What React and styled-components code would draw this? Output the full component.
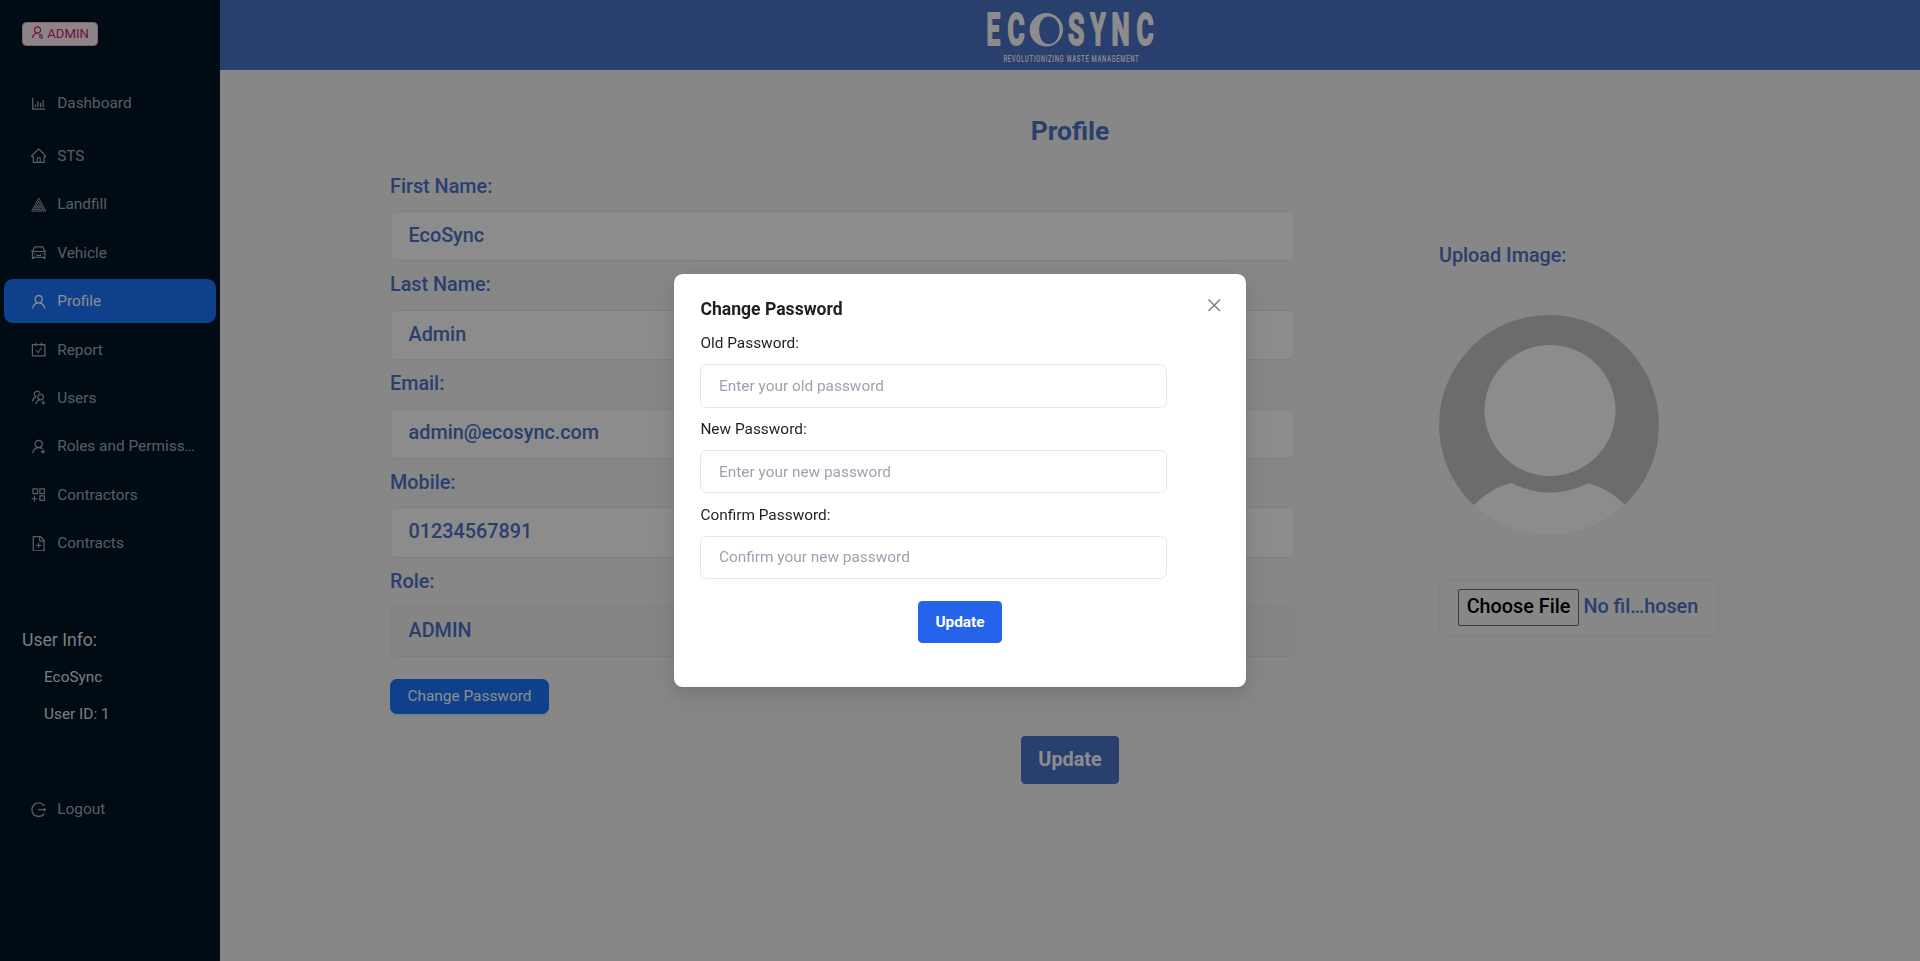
import React from 'react';
import styled, { createGlobalStyle, css } from 'styled-components';
import {
  AiOutlineBarChart,
  AiOutlineHome,
  AiOutlineCar,
  AiOutlineUser,
  AiOutlineCarryOut,
  AiOutlineUsergroupAdd,
  AiOutlineUserAdd,
  AiOutlineAppstoreAdd,
  AiOutlineFileAdd,
  AiOutlineLogout,
  AiOutlineUserSwitch,
  AiOutlineClose,
} from 'react-icons/ai';

const BRAND = '#4b73c8';
const PRIMARY = '#1a75ff';
const ICON_BOX = '64 64 896 896';

const GlobalStyle = createGlobalStyle`
  *, *::before, *::after { box-sizing: border-box; }
  body {
    margin: 0;
    overflow: hidden;
    font-family: Roboto, 'Liberation Sans', sans-serif;
    font-size: 15.4px;
    line-height: 24.2px;
    color: rgba(0, 0, 0, 0.88);
  }
  button, input { font: inherit; }
`;

const Page = styled.div`
  display: flex;
  height: 100vh;
  background: #f6f6f6;
`;

/* Sidebar */

const Sidebar = styled.aside`
  flex: 0 0 220px;
  min-width: 0;
  display: flex;
  flex-direction: column;
  align-items: stretch;
  background: #001426;
`;

const RoleTag = styled.span`
  align-self: flex-start;
  display: flex;
  align-items: center;
  gap: 2.8px;
  height: 24px;
  margin: 22px 0 31px 22px;
  padding: 0 7.9px 0 8.2px;
  border: 1px solid #ffadd2;
  border-radius: 4.4px;
  background: #fff0f6;
  color: #c41d7f;
  font-size: 13.2px;

  svg { margin-top: -3px; }
`;

const Menu = styled.nav`
  display: flex;
  flex-direction: column;
  gap: 4.4px;
  padding: 4.4px;
`;

const MenuItem = styled.a`
  display: flex;
  align-items: center;
  gap: 11px;
  height: 44px;
  padding: 0 17.6px 0 26.4px;
  border-radius: 8.8px;
  color: rgba(255, 255, 255, 0.65);
  ${(p) => p.$spaced && css`margin-bottom: 4.4px;`}
  ${(p) =>
    p.$active &&
    css`
      background: ${PRIMARY};
      color: #fff;
    `}

  svg { flex: none; width: 15.4px; height: 15.4px; }
`;

const MenuText = styled.span`
  overflow: hidden;
  white-space: nowrap;
  text-overflow: ellipsis;
`;

const UserInfo = styled.section`
  display: flex;
  flex-direction: column;
  gap: 12.8px;
  margin: 58.2px 0 57px;
  padding-left: 44px;
  color: rgba(255, 255, 255, 0.9);
`;

const UserInfoTitle = styled.h3`
  margin: 0 0 0 -22px;
  font-size: 17.6px;
  font-weight: 400;
`;

const UserInfoLine = styled.div``;

/* Main area */

const Main = styled.div`
  flex: 1;
  min-width: 0;
  display: flex;
  flex-direction: column;
`;

const Header = styled.header`
  flex: 0 0 70px;
  display: flex;
  justify-content: center;
  background: ${BRAND};
`;

const Content = styled.main`
  display: flex;
  flex-direction: column;
  align-items: center;
  padding-top: 44px;
  color: ${BRAND};
`;

const PageTitle = styled.h1`
  margin: 0;
  font-size: 26.4px;
  line-height: 35.2px;
  font-weight: 700;
`;

const Columns = styled.div`
  align-self: stretch;
  display: flex;
  gap: 144px;
  padding: 22.3px 0 0 170px;
  font-size: 19.8px;
  line-height: 30.8px;
  font-weight: 500;
`;

const Fields = styled.div`
  width: 905px;
  display: flex;
  flex-direction: column;
  align-items: flex-start;
`;

const Field = styled.label`
  display: flex;
  flex-direction: column;
  gap: 8.8px;
  width: 100%;
  margin-bottom: 8.8px;
`;

const ValueBox = styled.div`
  height: 50.4px;
  padding: 8.8px 17.6px;
  border: 1px solid #e8e9eb;
  border-radius: 6.6px;
  background: ${(p) => (p.$disabled ? '#f2f2f2' : '#fff')};
`;

const PrimaryButton = styled.button`
  height: 35.2px;
  margin-top: 13.4px;
  padding: 0 16.5px 0.5px;
  border: 1px solid ${PRIMARY};
  border-radius: 6.6px;
  background: ${PRIMARY};
  box-shadow: 0 2.2px 0 rgba(5, 145, 255, 0.1);
  color: #fff;
  font-size: 15.4px;
  font-weight: 400;
`;

const Upload = styled.div`
  width: 280px;
  padding-top: 69.3px;
`;

const Avatar = styled.svg`
  display: block;
  width: 220px;
  height: 220px;
  margin: 43.6px 0 44px;
`;

const FileBox = styled.div`
  display: flex;
  align-items: center;
  gap: 4.4px;
  height: 57px;
  padding: 0 17.6px 0 18px;
  border: 1px solid #e9eaec;
  border-radius: 6.6px;
  white-space: nowrap;
`;

const FileButton = styled.button`
  width: 121px;
  height: 37px;
  padding: 0 0 1px;
  border: 1px solid #6b6b6b;
  border-radius: 2px;
  background: transparent;
  color: #000;
`;

const FileName = styled.span`
  padding-bottom: 1px;
`;

const UpdateButton = styled.button`
  height: ${(p) => (p.$large ? '48.4px' : '42px')};
  padding: 0 17.6px;
  border: 0;
  border-radius: 4.4px;
  background: ${(p) => (p.$large ? BRAND : '#2563eb')};
  color: #fff;
  font-size: ${(p) => (p.$large ? '19.8px' : '15.4px')};
  font-weight: 700;
  margin-top: ${(p) => (p.$large ? '22px' : '0')};
`;

/* Modal */

const Mask = styled.div`
  position: fixed;
  inset: 0;
  display: flex;
  justify-content: center;
  align-items: flex-start;
  padding-top: 274px;
  background: rgba(0, 0, 0, 0.45);
`;

const Dialog = styled.div`
  position: relative;
  width: 572px;
  height: 413px;
  padding: 22px 26.4px;
  border-radius: 8.8px;
  background: #fff;
  box-shadow:
    0 6.6px 17.6px 0 rgba(0, 0, 0, 0.08),
    0 3.3px 6.6px -4.4px rgba(0, 0, 0, 0.12),
    0 9.9px 30.8px 8.8px rgba(0, 0, 0, 0.05);
`;

const CloseButton = styled.button`
  position: absolute;
  top: 18.7px;
  right: 19.5px;
  display: grid;
  place-items: center;
  width: 24.2px;
  height: 24.2px;
  padding: 0;
  border: 0;
  background: none;
  color: rgba(0, 0, 0, 0.5);
`;

const DialogTitle = styled.h2`
  margin: 0 0 8.6px;
  font-size: 17.6px;
  line-height: 26.4px;
  font-weight: 700;
`;

const DialogForm = styled.form`
  display: flex;
  flex-direction: column;
  align-items: center;
`;

const PasswordField = styled.label`
  align-self: flex-start;
  display: flex;
  flex-direction: column;
  gap: 8.8px;
  width: 467px;
  margin-bottom: 9.2px;
`;

const PasswordInput = styled.input`
  height: 43.6px;
  padding: 0 17.6px;
  border: 1px solid #e5e7eb;
  border-radius: 6.6px;
  outline: 0;
  background: #fff;

  &::placeholder { color: #9ca3af; opacity: 1; }
`;

const DialogFooter = styled.div`
  margin-top: 12.4px;
`;

/* Drawings */

const LogoSvg = styled.svg`
  display: block;
  width: 172px;
  height: 70px;
  fill: #fff;
  font-family: Roboto, 'Liberation Sans', sans-serif;
`;

const LogoLetter = styled.text`
  font-size: 43.5px;
  font-weight: 700;
  stroke: #fff;
  stroke-width: 2px;
  stroke-linejoin: round;
`;

const Tagline = styled.text`
  font-size: 9px;
  font-weight: 500;
`;

const LOGO_LETTERS = [
  ['E', 2.4, 0.56],
  ['C', 23.4, 0.6],
  ['S', 84, 0.61],
  ['Y', 106.2, 0.57],
  ['N', 127.4, 0.59],
  ['C', 152.4, 0.6],
];

function Logo() {
  return (
    <LogoSvg viewBox="0 0 172 70">
      {LOGO_LETTERS.map(([letter, x, squeeze]) => (
        <LogoLetter key={x} transform={`translate(${x} 45.100) scale(${squeeze} 1)`}>
          {letter}
        </LogoLetter>
      ))}
      <path
        fillRule="evenodd"
        d="M62.300 13a16.700 16.700 0 1 0 0 33.400a16.700 16.700 0 1 0 0-33.400zM64.800 16.600c6.200 0 10.800 6 10.800 13.600s-4.600 13.800-10.800 13.800s-9.600-6.200-9.600-13.800s3.400-13.600 9.600-13.600z"
      />
      <Tagline transform="translate(19.400 62) scale(.66 1)" textLength="205" lengthAdjust="spacing">
        REVOLUTIONIZING WASTE MANAGEMENT
      </Tagline>
    </LogoSvg>
  );
}

function LandfillIcon() {
  return (
    <svg viewBox="0 0 16 16" fill="none" stroke="currentColor" strokeWidth="1">
      <path d="M8 1.200L15.300 14.600H.7zM8 4.600L12.700 12.900H3.300zM8 8L10 11.300H6z" />
    </svg>
  );
}

function DefaultAvatar() {
  return (
    <Avatar viewBox="0 0 220 220">
      <clipPath id="avatar-disc">
        <circle cx="110" cy="110" r="110" />
      </clipPath>
      <g clipPath="url(#avatar-disc)">
        <rect width="220" height="220" fill="#c5c5c5" />
        <circle cx="111" cy="95.500" r="65.500" fill="#fff" />
        <path
          d="M34.500 190.500C45 180 57 172 72 168C97 180.500 124 181 149.500 168C163 172 176 179.500 186.500 190.500V220H34.500z"
          fill="#fff"
        />
      </g>
    </Avatar>
  );
}

const MENU = [
  { label: 'Dashboard', icon: AiOutlineBarChart, spaced: true },
  { label: 'STS', icon: AiOutlineHome },
  { label: 'Landfill' },
  { label: 'Vehicle', icon: AiOutlineCar },
  { label: 'Profile', icon: AiOutlineUser, active: true },
  { label: 'Report', icon: AiOutlineCarryOut },
  { label: 'Users', icon: AiOutlineUsergroupAdd },
  { label: 'Roles and Permissions', icon: AiOutlineUserAdd },
  { label: 'Contractors', icon: AiOutlineAppstoreAdd },
  { label: 'Contracts', icon: AiOutlineFileAdd },
];

const PROFILE = [
  { label: 'First Name:', value: 'EcoSync' },
  { label: 'Last Name:', value: 'Admin' },
  { label: 'Email:', value: 'admin@ecosync.com' },
  { label: 'Mobile:', value: '01234567891' },
  { label: 'Role:', value: 'ADMIN', disabled: true },
];

const PASSWORDS = [
  { label: 'Old Password:', placeholder: 'Enter your old password' },
  { label: 'New Password:', placeholder: 'Enter your new password' },
  { label: 'Confirm Password:', placeholder: 'Confirm your new password' },
];

function MenuEntry({ label, icon: Icon, active, spaced }) {
  return (
    <MenuItem $active={active} $spaced={spaced}>
      {Icon ? <Icon viewBox={ICON_BOX} /> : <LandfillIcon />}
      <MenuText>{label}</MenuText>
    </MenuItem>
  );
}

export default function App() {
  return (
    <>
      <GlobalStyle />
      <Page>
        <Sidebar>
          <RoleTag>
            <AiOutlineUserSwitch size={13.2} viewBox={ICON_BOX} />
            ADMIN
          </RoleTag>
          <Menu>
            {MENU.map((item) => (
              <MenuEntry key={item.label} {...item} />
            ))}
          </Menu>
          <UserInfo>
            <UserInfoTitle>User Info:</UserInfoTitle>
            <UserInfoLine>EcoSync</UserInfoLine>
            <UserInfoLine>User ID: 1</UserInfoLine>
          </UserInfo>
          <Menu>
            <MenuEntry label="Logout" icon={AiOutlineLogout} />
          </Menu>
        </Sidebar>
        <Main>
          <Header>
            <Logo />
          </Header>
          <Content>
            <PageTitle>Profile</PageTitle>
            <Columns>
              <Fields>
                {PROFILE.map((field) => (
                  <Field key={field.label}>
                    {field.label}
                    <ValueBox $disabled={field.disabled}>{field.value}</ValueBox>
                  </Field>
                ))}
                <PrimaryButton>Change Password</PrimaryButton>
              </Fields>
              <Upload>
                Upload Image:
                <DefaultAvatar />
                <FileBox>
                  <FileButton>Choose File</FileButton>
                  <FileName>No fil…hosen</FileName>
                </FileBox>
              </Upload>
            </Columns>
            <UpdateButton $large>Update</UpdateButton>
          </Content>
        </Main>
      </Page>
      <Mask>
        <Dialog role="dialog">
          <CloseButton aria-label="Close">
            <AiOutlineClose size={18.5} />
          </CloseButton>
          <DialogTitle>Change Password</DialogTitle>
          <DialogForm>
            {PASSWORDS.map((field) => (
              <PasswordField key={field.label}>
                {field.label}
                <PasswordInput type="password" placeholder={field.placeholder} />
              </PasswordField>
            ))}
            <DialogFooter>
              <UpdateButton type="button">Update</UpdateButton>
            </DialogFooter>
          </DialogForm>
        </Dialog>
      </Mask>
    </>
  );
}
